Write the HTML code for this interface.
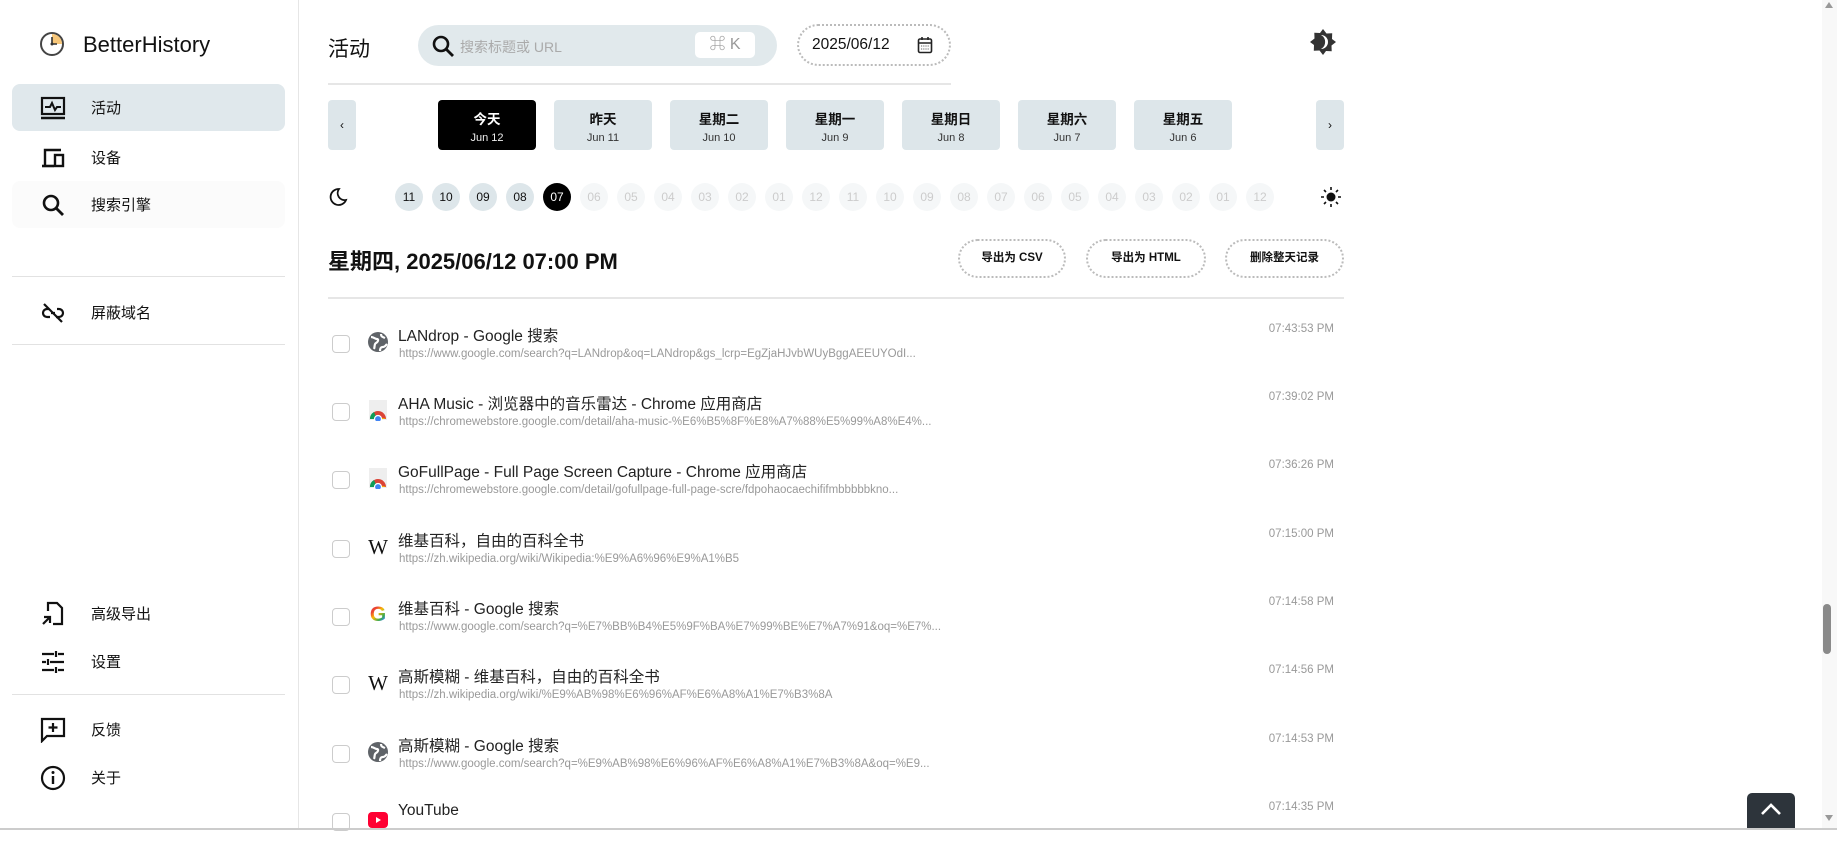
<!DOCTYPE html>
<html><head><meta charset="utf-8">
<style>
*{box-sizing:border-box;margin:0;padding:0}
body{width:1837px;height:830px;overflow:hidden;background:#fff;font-family:"Liberation Sans","Noto Sans CJK SC",sans-serif;color:#111;position:relative}
.a{position:absolute}
.side{left:0;top:0;width:299px;height:830px;border-right:1px solid #e6e6e6}
.nav{left:12px;width:273px;height:47px;border-radius:8px}
.nav span{position:absolute;left:79px;top:13px;font-size:15px}
.nav svg{position:absolute;left:28px;top:11px}
.hr{height:1px;background:#e2e2e2}
.card{top:100px;width:98px;height:50px;background:#dde6ea;border-radius:4px;text-align:center}
.card b{display:block;font-size:13.5px;margin-top:8px}
.card i{display:block;font-style:normal;font-size:11px;margin-top:4px;color:#333}
.hc{top:183px;width:28px;height:28px;border-radius:50%;font-size:12px;text-align:center;line-height:28px}
.btn{top:239px;height:39px;border:2px dotted #bbb;border-radius:20px;font-size:11.5px;font-weight:bold;text-align:center;line-height:35px}
.row{left:332px;width:1002px;height:68px}
.cb{position:absolute;left:0;top:13px;width:18px;height:18px;border:1.5px solid #ccc;border-radius:4px}
.ic{position:absolute;left:35px;top:9px;width:22px;height:22px}
.tt{position:absolute;left:66px;top:2px;font-size:15.5px;color:#222;white-space:nowrap}
.url{position:absolute;left:67px;top:26px;font-size:11.5px;color:#999;white-space:nowrap}
.tm{position:absolute;right:0;top:1px;font-size:11.5px;color:#999}
</style></head><body>
<div class="a side"></div>
<svg class="a" style="left:39px;top:31px" width="26" height="26" viewBox="0 0 26 26"><circle cx="13" cy="13" r="11" fill="#fff" stroke="#444" stroke-width="2"/><path d="M13 13V3A10 10 0 0 1 23 13Z" fill="#f7c77a"/><path d="M13 6V13H18" stroke="#333" stroke-width="1.6" fill="none"/><circle cx="13" cy="13" r="1.5" fill="#333"/></svg>
<div class="a" style="left:83px;top:32px;font-size:22px;font-weight:500">BetterHistory</div>

<div class="a nav" style="top:84px;background:#e0e8ec"><svg width="26" height="26" viewBox="0 0 26 26"><rect x="2" y="3" width="22" height="16" fill="none" stroke="#111" stroke-width="2.2"/><path d="M5 12h5l2-4 3 7 2-3h4" fill="none" stroke="#111" stroke-width="2"/><path d="M1 23h24" stroke="#111" stroke-width="2.4"/></svg><span>活动</span></div>
<div class="a nav" style="top:134px"><svg width="26" height="26" viewBox="0 0 26 26"><path d="M5 20V5h16" fill="none" stroke="#111" stroke-width="2.4"/><path d="M2 21h12" stroke="#111" stroke-width="2.6"/><rect x="15" y="10" width="8" height="11" fill="none" stroke="#111" stroke-width="2.4"/></svg><span>设备</span></div>
<div class="a nav" style="top:181px;background:#fbfbfb"><svg width="26" height="26" viewBox="0 0 26 26"><circle cx="11" cy="11" r="7" fill="none" stroke="#111" stroke-width="2.6"/><path d="M16 16l7 7" stroke="#111" stroke-width="2.8"/></svg><span>搜索引擎</span></div>
<div class="a hr" style="left:12px;width:273px;top:276px"></div>
<div class="a nav" style="top:289px"><svg width="26" height="26" viewBox="0 0 26 26"><path d="M9 9H7a4 4 0 0 0 0 8h3M17 9h2a4 4 0 0 1 0 8h-3M11 13h4" fill="none" stroke="#111" stroke-width="2.2"/><path d="M4 4l18 18" stroke="#111" stroke-width="2.2"/></svg><span>屏蔽域名</span></div>
<div class="a hr" style="left:12px;width:273px;top:344px"></div>
<div class="a nav" style="top:590px"><svg width="26" height="26" viewBox="0 0 26 26"><path d="M8 10V2h9l5 5v16H13" fill="none" stroke="#111" stroke-width="2.2"/><path d="M3 23l7-7M4 16h6v6" fill="none" stroke="#111" stroke-width="2.2"/></svg><span>高级导出</span></div>
<div class="a nav" style="top:638px"><svg width="26" height="26" viewBox="0 0 26 26"><path d="M2 5h12M18 5h6M16 2v6M2 13h4M10 13h14M8 10v6M2 21h12M18 21h6M16 18v6" stroke="#111" stroke-width="2.2"/></svg><span>设置</span></div>
<div class="a hr" style="left:12px;width:273px;top:694px"></div>
<div class="a nav" style="top:706px"><svg width="26" height="26" viewBox="0 0 26 26"><path d="M2 2h22v17H7l-5 5z" fill="none" stroke="#111" stroke-width="2.2"/><path d="M13 6v9M8.5 10.5h9" stroke="#111" stroke-width="2.2"/></svg><span>反馈</span></div>
<div class="a nav" style="top:754px"><svg width="26" height="26" viewBox="0 0 26 26"><circle cx="13" cy="13" r="11" fill="none" stroke="#111" stroke-width="2.2"/><path d="M13 11v8" stroke="#111" stroke-width="2.4"/><circle cx="13" cy="7.5" r="1.5" fill="#111"/></svg><span>关于</span></div>

<div class="a" style="left:328px;top:33px;font-size:21px">活动</div>
<div class="a" style="left:418px;top:25px;width:359px;height:41px;border-radius:21px;background:#e1e9ec"></div>
<svg class="a" style="left:430px;top:33px" width="26" height="26" viewBox="0 0 26 26"><circle cx="11" cy="11" r="7" fill="none" stroke="#111" stroke-width="2.6"/><path d="M16 16l7 7" stroke="#111" stroke-width="2.8"/></svg>
<div class="a" style="left:460px;top:37px;font-size:14px;color:#aaa">搜索标题或 URL</div>
<div class="a" style="left:695px;top:32px;width:60px;height:26px;background:#fff;border-radius:5px;font-size:16px;color:#999;text-align:center;line-height:26px">⌘ K</div>
<div class="a" style="left:797px;top:24px;width:154px;height:42px;border:2px dotted #bbb;border-radius:21px"></div>
<div class="a" style="left:812px;top:36px;font-size:15.5px">2025/06/12</div>
<svg class="a" style="left:917px;top:36px" width="16" height="18" viewBox="0 0 16 18"><rect x="1.5" y="3" width="13" height="13.5" rx="1.5" fill="none" stroke="#222" stroke-width="1.6"/><path d="M1.5 7h13M5 1v3M11 1v3" stroke="#222" stroke-width="1.6"/><path d="M4 10h8M4 13h8" stroke="#666" stroke-width="1" stroke-dasharray="1.2 1"/></svg>
<svg class="a" style="left:1309px;top:28px" width="28" height="28" viewBox="0 0 28 28"><path d="M14 1l3.5 4.5 5.7-.2-.2 5.7L27 14l-4.5 3.5.2 5.7-5.7-.2L14 27l-3.5-4.5-5.7.2.2-5.7L1 14l4.5-3.5-.2-5.7 5.7.2z" fill="#333"/><path d="M12 7a7 7 0 0 1 0 14a8 8 0 0 0 0-14z" fill="#fff"/></svg>
<div class="a hr" style="left:328px;width:623px;top:83px;background:#e6e6e6;height:2px"></div>

<div class="a card" style="left:328px;width:28px;font-size:12px;line-height:50px">‹</div>
<div class="a card" style="left:438px;background:#000;color:#fff"><b>今天</b><i style="color:#eee">Jun 12</i></div>
<div class="a card" style="left:554px"><b>昨天</b><i>Jun 11</i></div>
<div class="a card" style="left:670px"><b>星期二</b><i>Jun 10</i></div>
<div class="a card" style="left:786px"><b>星期一</b><i>Jun 9</i></div>
<div class="a card" style="left:902px"><b>星期日</b><i>Jun 8</i></div>
<div class="a card" style="left:1018px"><b>星期六</b><i>Jun 7</i></div>
<div class="a card" style="left:1134px"><b>星期五</b><i>Jun 6</i></div>
<div class="a card" style="left:1316px;width:28px;font-size:12px;line-height:50px">›</div>

<svg class="a" style="left:328px;top:187px" width="20" height="20" viewBox="0 0 20 20"><path d="M11 2a8 8 0 1 0 7 11A7 7 0 0 1 11 2z" fill="none" stroke="#111" stroke-width="1.8"/></svg>
<div class="a hc" style="left:395px;background:#dde6ea">11</div>
<div class="a hc" style="left:432px;background:#dde6ea">10</div>
<div class="a hc" style="left:469px;background:#dde6ea">09</div>
<div class="a hc" style="left:506px;background:#dde6ea">08</div>
<div class="a hc" style="left:543px;background:#000;color:#fff">07</div>
<div class="a hc" style="left:580px;background:#f5f7f8;color:#ccc">06</div>
<div class="a hc" style="left:617px;background:#f5f7f8;color:#ccc">05</div>
<div class="a hc" style="left:654px;background:#f5f7f8;color:#ccc">04</div>
<div class="a hc" style="left:691px;background:#f5f7f8;color:#ccc">03</div>
<div class="a hc" style="left:728px;background:#f5f7f8;color:#ccc">02</div>
<div class="a hc" style="left:765px;background:#f5f7f8;color:#ccc">01</div>
<div class="a hc" style="left:802px;background:#f5f7f8;color:#ccc">12</div>
<div class="a hc" style="left:839px;background:#f5f7f8;color:#ccc">11</div>
<div class="a hc" style="left:876px;background:#f5f7f8;color:#ccc">10</div>
<div class="a hc" style="left:913px;background:#f5f7f8;color:#ccc">09</div>
<div class="a hc" style="left:950px;background:#f5f7f8;color:#ccc">08</div>
<div class="a hc" style="left:987px;background:#f5f7f8;color:#ccc">07</div>
<div class="a hc" style="left:1024px;background:#f5f7f8;color:#ccc">06</div>
<div class="a hc" style="left:1061px;background:#f5f7f8;color:#ccc">05</div>
<div class="a hc" style="left:1098px;background:#f5f7f8;color:#ccc">04</div>
<div class="a hc" style="left:1135px;background:#f5f7f8;color:#ccc">03</div>
<div class="a hc" style="left:1172px;background:#f5f7f8;color:#ccc">02</div>
<div class="a hc" style="left:1209px;background:#f5f7f8;color:#ccc">01</div>
<div class="a hc" style="left:1246px;background:#f5f7f8;color:#ccc">12</div>
<svg class="a" style="left:1320px;top:186px" width="22" height="22" viewBox="0 0 22 22"><circle cx="11" cy="11" r="4.5" fill="#111"/><path d="M11 1v3M11 18v3M1 11h3M18 11h3M4 4l2 2M16 16l2 2M4 18l2-2M16 6l2-2" stroke="#111" stroke-width="1.6"/></svg>

<div class="a" style="left:328px;top:244px;font-size:22px;font-weight:bold">星期四, 2025/06/12 07:00 PM</div>
<div class="a btn" style="left:958px;width:108px">导出为 CSV</div>
<div class="a btn" style="left:1086px;width:120px">导出为 HTML</div>
<div class="a btn" style="left:1225px;width:119px">删除整天记录</div>
<div class="a hr" style="left:328px;width:1016px;top:297px;height:2px;background:#e6e6e6"></div>

<div class="a row" style="top:322px"><div class="cb" style="top:13px"></div><svg class="ic" viewBox="0 0 22 22"><circle cx="11" cy="11" r="10" fill="#5f6368"/><path d="M4 6c3 0 4 2 6 2s1 3-1 4-1 4-2 6M14 3c0 3 2 3 4 4M13 20c0-3 1-4 3-4s3-2 4-3" fill="none" stroke="#fff" stroke-width="2.2"/></svg><div class="tt">LANdrop - Google 搜索</div><div class="url">https://www.google.com/search?q=LANdrop&amp;oq=LANdrop&amp;gs_lcrp=EgZjaHJvbWUyBggAEEUYOdI...</div><div class="tm">07:43:53 PM</div></div>
<div class="a row" style="top:390px"><div class="cb"></div><svg class="ic" viewBox="0 0 22 22"><rect x="2" y="1" width="18" height="20" fill="#eee"/><path d="M3 20a8 8 0 0 1 16 0z" fill="#db4437"/><path d="M3 20a8 8 0 0 1 4-7l3 7z" fill="#0f9d58"/><path d="M11 20a8 8 0 0 1 8 0z" fill="#f4b400"/><circle cx="11" cy="20" r="3.5" fill="#4285f4" stroke="#fff" stroke-width="1.2"/></svg><div class="tt">AHA Music - 浏览器中的音乐雷达 - Chrome 应用商店</div><div class="url">https://chromewebstore.google.com/detail/aha-music-%E6%B5%8F%E8%A7%88%E5%99%A8%E4%...</div><div class="tm">07:39:02 PM</div></div>
<div class="a row" style="top:458px"><div class="cb"></div><svg class="ic" viewBox="0 0 22 22"><rect x="2" y="1" width="18" height="20" fill="#eee"/><path d="M3 20a8 8 0 0 1 16 0z" fill="#db4437"/><path d="M3 20a8 8 0 0 1 4-7l3 7z" fill="#0f9d58"/><path d="M11 20a8 8 0 0 1 8 0z" fill="#f4b400"/><circle cx="11" cy="20" r="3.5" fill="#4285f4" stroke="#fff" stroke-width="1.2"/></svg><div class="tt">GoFullPage - Full Page Screen Capture - Chrome 应用商店</div><div class="url">https://chromewebstore.google.com/detail/gofullpage-full-page-scre/fdpohaocaechififmbbbbbkno...</div><div class="tm">07:36:26 PM</div></div>
<div class="a row" style="top:527px"><div class="cb"></div><div class="ic" style="font-family:'Liberation Serif',serif;font-size:21px;line-height:22px;text-align:center">W</div><div class="tt">维基百科，自由的百科全书</div><div class="url">https://zh.wikipedia.org/wiki/Wikipedia:%E9%A6%96%E9%A1%B5</div><div class="tm">07:15:00 PM</div></div>
<div class="a row" style="top:595px"><div class="cb"></div><div class="ic" style="font-size:21px;font-weight:bold;line-height:22px;text-align:center;background:linear-gradient(135deg,#ea4335 30%,#fbbc05 45%,#34a853 65%,#4285f4 75%);-webkit-background-clip:text;color:transparent">G</div><div class="tt">维基百科 - Google 搜索</div><div class="url">https://www.google.com/search?q=%E7%BB%B4%E5%9F%BA%E7%99%BE%E7%A7%91&amp;oq=%E7%...</div><div class="tm">07:14:58 PM</div></div>
<div class="a row" style="top:663px"><div class="cb"></div><div class="ic" style="font-family:'Liberation Serif',serif;font-size:21px;line-height:22px;text-align:center">W</div><div class="tt">高斯模糊 - 维基百科，自由的百科全书</div><div class="url">https://zh.wikipedia.org/wiki/%E9%AB%98%E6%96%AF%E6%A8%A1%E7%B3%8A</div><div class="tm">07:14:56 PM</div></div>
<div class="a row" style="top:732px"><div class="cb"></div><svg class="ic" viewBox="0 0 22 22"><circle cx="11" cy="11" r="10" fill="#5f6368"/><path d="M4 6c3 0 4 2 6 2s1 3-1 4-1 4-2 6M14 3c0 3 2 3 4 4M13 20c0-3 1-4 3-4s3-2 4-3" fill="none" stroke="#fff" stroke-width="2.2"/></svg><div class="tt">高斯模糊 - Google 搜索</div><div class="url">https://www.google.com/search?q=%E9%AB%98%E6%96%AF%E6%A8%A1%E7%B3%8A&amp;oq=%E9...</div><div class="tm">07:14:53 PM</div></div>
<div class="a row" style="top:800px"><div class="cb"></div><svg class="ic" viewBox="0 0 22 22"><rect x="1" y="3" width="20" height="16" rx="4" fill="#ff0033"/><path d="M9 8v6l5-3z" fill="#fff"/></svg><div class="tt">YouTube</div><div class="tm">07:14:35 PM</div></div>

<div class="a" style="left:1822px;top:0;width:15px;height:830px;background:#f8f8f8"></div>
<div class="a" style="left:1823px;top:604px;width:8px;height:50px;border-radius:4px;background:#8a8a8a"></div>
<div class="a" style="left:1825px;top:2px;width:0;height:0;border-left:4px solid transparent;border-right:4px solid transparent;border-bottom:6px solid #999"></div>
<div class="a" style="left:1825px;top:815px;width:0;height:0;border-left:4px solid transparent;border-right:4px solid transparent;border-top:6px solid #999"></div>
<div class="a" style="left:1747px;top:793px;width:48px;height:37px;background:#2d343b;border-radius:5px 5px 0 0"></div>
<svg class="a" style="left:1759px;top:800px" width="24" height="18" viewBox="0 0 24 18"><path d="M3 14l9-9 9 9" fill="none" stroke="#fff" stroke-width="2.6"/></svg>
<div class="a" style="left:0;top:828px;width:1837px;height:2px;background:#ccc"></div>
</body></html>
